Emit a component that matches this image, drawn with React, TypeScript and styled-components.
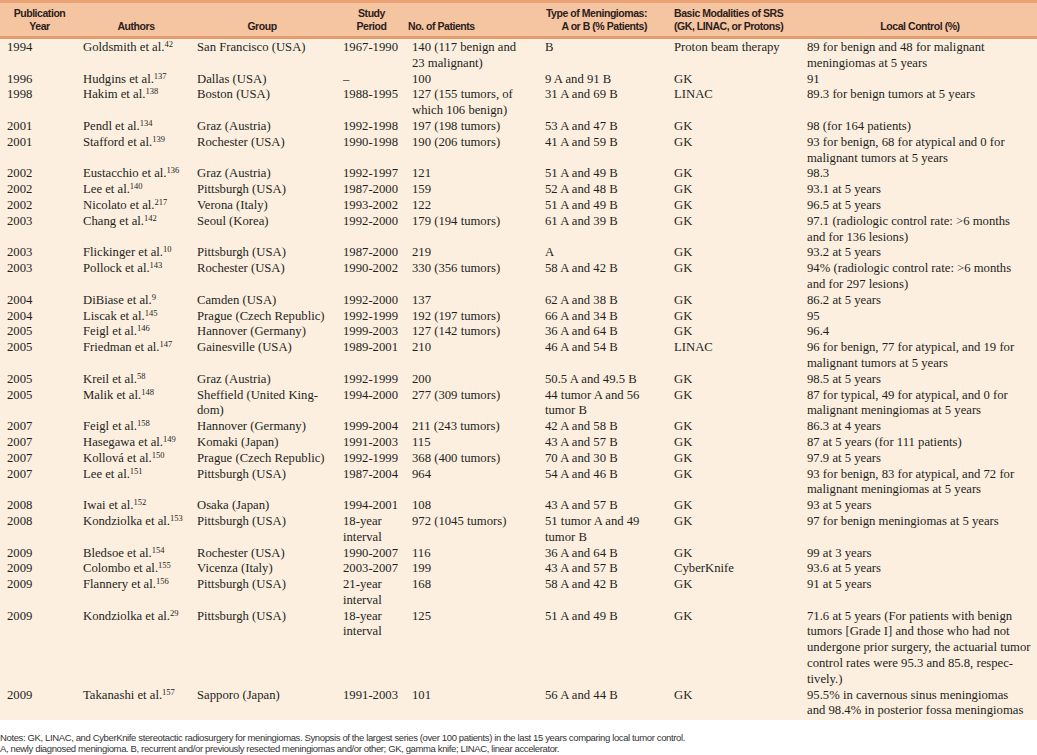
import React from 'react';
import styled, { createGlobalStyle } from 'styled-components';

type Row = {
  year: string;
  author: string;
  ref: string;
  group: string;
  period: string;
  patients: string;
  type: string;
  modality: string;
  control: string;
};

const GlobalStyle = createGlobalStyle`
  html, body {
    margin: 0;
    padding: 0;
    background: #ffffff;
  }
`;

const columns = '79px 114px 146px 69px 133px 129px 133px 234px';

const Page = styled.div`
  width: 1037px;
  color: #231f20;
`;

const HeaderRow = styled.div`
  display: grid;
  grid-template-columns: ${columns};
  height: 33px;
  background: #f5c4a0;
  border-top: 3px solid #eaa173;
  border-bottom: 3px solid #e69c6c;
`;

const HeadCell = styled.div<{ $align?: 'left' | 'center' | 'right'; $pad?: string }>`
  align-self: end;
  padding: ${(p) => p.$pad || '0 4px'};
  padding-bottom: 3px;
  text-align: ${(p) => p.$align || 'center'};
  font-family: 'Liberation Sans', Arial, sans-serif;
  font-weight: 700;
  font-size: 10.5px;
  letter-spacing: -0.45px;
  line-height: 13px;
  color: #2b201b;
  white-space: pre;
`;

const Body = styled.div`
  background: #fdefe0;
  padding: 1px 0 1px;
`;

const BodyRow = styled.div`
  display: grid;
  grid-template-columns: ${columns};
`;

const Cell = styled.div<{ $first?: boolean }>`
  padding: 0 0 0 ${(p) => (p.$first ? '7px' : '4px')};
  font-family: 'Liberation Serif', 'Times New Roman', serif;
  font-size: 12.7px;
  line-height: 15.8px;
  white-space: pre;
`;

const Ref = styled.sup`
  font-size: 8.5px;
  line-height: 0;
  vertical-align: 4px;
`;

const Notes = styled.div`
  margin-top: 12px;
  font-family: 'Liberation Sans', Arial, sans-serif;
  font-size: 9.5px;
  letter-spacing: -0.37px;
  line-height: 11px;
  color: #333333;
`;

const heads: { label: string; align?: 'left' | 'center' | 'right'; pad?: string }[] = [
  { label: 'Publication\nYear' },
  { label: 'Authors' },
  { label: 'Group', pad: '0 8px 0 0' },
  { label: 'Study\nPeriod', pad: '0 8px 0 4px' },
  { label: 'No. of Patients', align: 'left', pad: '0' },
  { label: 'Type of Meningiomas:\nA or B (% Patients)', align: 'right', pad: '0 23px 0 0' },
  { label: 'Basic Modalities of SRS\n(GK, LINAC, or Protons)', align: 'left', pad: '0 0 0 4px' },
  { label: 'Local Control (%)' },
];

const rows: Row[] = [
  { year: '1994', author: 'Goldsmith et al.', ref: '42', group: 'San Francisco (USA)', period: '1967-1990', patients: '140 (117 benign and\n23 malignant)', type: 'B', modality: 'Proton beam therapy', control: '89 for benign and 48 for malignant\nmeningiomas at 5 years' },
  { year: '1996', author: 'Hudgins et al.', ref: '137', group: 'Dallas (USA)', period: '–', patients: '100', type: '9 A and 91 B', modality: 'GK', control: '91' },
  { year: '1998', author: 'Hakim et al.', ref: '138', group: 'Boston (USA)', period: '1988-1995', patients: '127 (155 tumors, of\nwhich 106 benign)', type: '31 A and 69 B', modality: 'LINAC', control: '89.3 for benign tumors at 5 years' },
  { year: '2001', author: 'Pendl et al.', ref: '134', group: 'Graz (Austria)', period: '1992-1998', patients: '197 (198 tumors)', type: '53 A and 47 B', modality: 'GK', control: '98 (for 164 patients)' },
  { year: '2001', author: 'Stafford et al.', ref: '139', group: 'Rochester (USA)', period: '1990-1998', patients: '190 (206 tumors)', type: '41 A and 59 B', modality: 'GK', control: '93 for benign, 68 for atypical and 0 for\nmalignant tumors at 5 years' },
  { year: '2002', author: 'Eustacchio et al.', ref: '136', group: 'Graz (Austria)', period: '1992-1997', patients: '121', type: '51 A and 49 B', modality: 'GK', control: '98.3' },
  { year: '2002', author: 'Lee et al.', ref: '140', group: 'Pittsburgh (USA)', period: '1987-2000', patients: '159', type: '52 A and 48 B', modality: 'GK', control: '93.1 at 5 years' },
  { year: '2002', author: 'Nicolato et al.', ref: '217', group: 'Verona (Italy)', period: '1993-2002', patients: '122', type: '51 A and 49 B', modality: 'GK', control: '96.5 at 5 years' },
  { year: '2003', author: 'Chang et al.', ref: '142', group: 'Seoul (Korea)', period: '1992-2000', patients: '179 (194 tumors)', type: '61 A and 39 B', modality: 'GK', control: '97.1 (radiologic control rate: >6 months\nand for 136 lesions)' },
  { year: '2003', author: 'Flickinger et al.', ref: '10', group: 'Pittsburgh (USA)', period: '1987-2000', patients: '219', type: 'A', modality: 'GK', control: '93.2 at 5 years' },
  { year: '2003', author: 'Pollock et al.', ref: '143', group: 'Rochester (USA)', period: '1990-2002', patients: '330 (356 tumors)', type: '58 A and 42 B', modality: 'GK', control: '94% (radiologic control rate: >6 months\nand for 297 lesions)' },
  { year: '2004', author: 'DiBiase et al.', ref: '9', group: 'Camden (USA)', period: '1992-2000', patients: '137', type: '62 A and 38 B', modality: 'GK', control: '86.2 at 5 years' },
  { year: '2004', author: 'Liscak et al.', ref: '145', group: 'Prague (Czech Republic)', period: '1992-1999', patients: '192 (197 tumors)', type: '66 A and 34 B', modality: 'GK', control: '95' },
  { year: '2005', author: 'Feigl et al.', ref: '146', group: 'Hannover (Germany)', period: '1999-2003', patients: '127 (142 tumors)', type: '36 A and 64 B', modality: 'GK', control: '96.4' },
  { year: '2005', author: 'Friedman et al.', ref: '147', group: 'Gainesville (USA)', period: '1989-2001', patients: '210', type: '46 A and 54 B', modality: 'LINAC', control: '96 for benign, 77 for atypical, and 19 for\nmalignant tumors at 5 years' },
  { year: '2005', author: 'Kreil et al.', ref: '58', group: 'Graz (Austria)', period: '1992-1999', patients: '200', type: '50.5 A and 49.5 B', modality: 'GK', control: '98.5 at 5 years' },
  { year: '2005', author: 'Malik et al.', ref: '148', group: 'Sheffield (United King-\ndom)', period: '1994-2000', patients: '277 (309 tumors)', type: '44 tumor A and 56\ntumor B', modality: 'GK', control: '87 for typical, 49 for atypical, and 0 for\nmalignant meningiomas at 5 years' },
  { year: '2007', author: 'Feigl et al.', ref: '158', group: 'Hannover (Germany)', period: '1999-2004', patients: '211 (243 tumors)', type: '42 A and 58 B', modality: 'GK', control: '86.3 at 4 years' },
  { year: '2007', author: 'Hasegawa et al.', ref: '149', group: 'Komaki (Japan)', period: '1991-2003', patients: '115', type: '43 A and 57 B', modality: 'GK', control: '87 at 5 years (for 111 patients)' },
  { year: '2007', author: 'Kollová et al.', ref: '150', group: 'Prague (Czech Republic)', period: '1992-1999', patients: '368 (400 tumors)', type: '70 A and 30 B', modality: 'GK', control: '97.9 at 5 years' },
  { year: '2007', author: 'Lee et al.', ref: '151', group: 'Pittsburgh (USA)', period: '1987-2004', patients: '964', type: '54 A and 46 B', modality: 'GK', control: '93 for benign, 83 for atypical, and 72 for\nmalignant meningiomas at 5 years' },
  { year: '2008', author: 'Iwai et al.', ref: '152', group: 'Osaka (Japan)', period: '1994-2001', patients: '108', type: '43 A and 57 B', modality: 'GK', control: '93 at 5 years' },
  { year: '2008', author: 'Kondziolka et al.', ref: '153', group: 'Pittsburgh (USA)', period: '18-year\ninterval', patients: '972 (1045 tumors)', type: '51 tumor A and 49\ntumor B', modality: 'GK', control: '97 for benign meningiomas at 5 years' },
  { year: '2009', author: 'Bledsoe et al.', ref: '154', group: 'Rochester (USA)', period: '1990-2007', patients: '116', type: '36 A and 64 B', modality: 'GK', control: '99 at 3 years' },
  { year: '2009', author: 'Colombo et al.', ref: '155', group: 'Vicenza (Italy)', period: '2003-2007', patients: '199', type: '43 A and 57 B', modality: 'CyberKnife', control: '93.6 at 5 years' },
  { year: '2009', author: 'Flannery et al.', ref: '156', group: 'Pittsburgh (USA)', period: '21-year\ninterval', patients: '168', type: '58 A and 42 B', modality: 'GK', control: '91 at 5 years' },
  { year: '2009', author: 'Kondziolka et al.', ref: '29', group: 'Pittsburgh (USA)', period: '18-year\ninterval', patients: '125', type: '51 A and 49 B', modality: 'GK', control: '71.6 at 5 years (For patients with benign\ntumors [Grade I] and those who had not\nundergone prior surgery, the actuarial tumor\ncontrol rates were 95.3 and 85.8, respec-\ntively.)' },
  { year: '2009', author: 'Takanashi et al.', ref: '157', group: 'Sapporo (Japan)', period: '1991-2003', patients: '101', type: '56 A and 44 B', modality: 'GK', control: '95.5% in cavernous sinus meningiomas\nand 98.4% in posterior fossa meningiomas' },
];

const App: React.FC = () => {
  return (
    <Page>
      <GlobalStyle />
      <HeaderRow>
        {heads.map((h) => (
          <HeadCell key={h.label} $align={h.align} $pad={h.pad}>
            {h.label}
          </HeadCell>
        ))}
      </HeaderRow>
      <Body>
        {rows.map((r, i) => (
          <BodyRow key={i}>
            <Cell $first>{r.year}</Cell>
            <Cell>
              {r.author}
              <Ref>{r.ref}</Ref>
            </Cell>
            <Cell>{r.group}</Cell>
            <Cell>{r.period}</Cell>
            <Cell>{r.patients}</Cell>
            <Cell>{r.type}</Cell>
            <Cell>{r.modality}</Cell>
            <Cell>{r.control}</Cell>
          </BodyRow>
        ))}
      </Body>
      <Notes>
        Notes: GK, LINAC, and CyberKnife stereotactic radiosurgery for meningiomas. Synopsis of the largest series (over 100 patients) in the last 15 years comparing local tumor control.
        <br />
        A, newly diagnosed meningioma. B, recurrent and/or previously resected meningiomas and/or other; GK, gamma knife; LINAC, linear accelerator.
      </Notes>
    </Page>
  );
};

export default App;
